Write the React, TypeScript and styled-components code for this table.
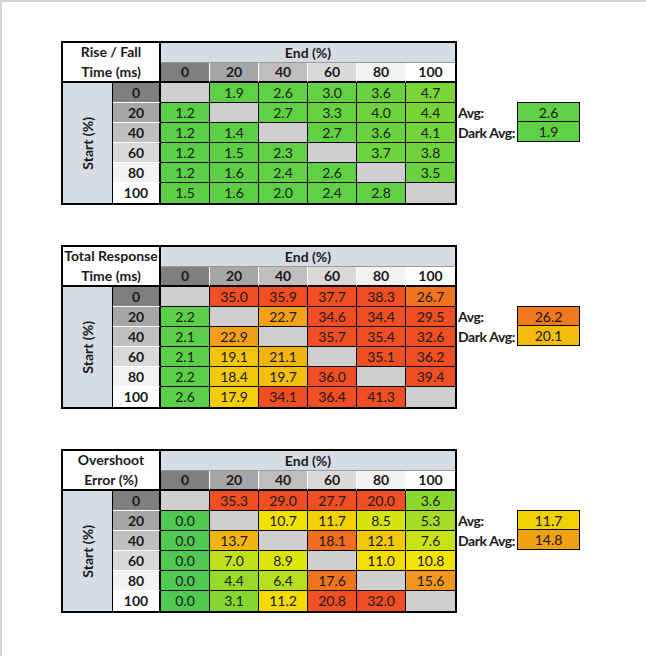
import styled, { createGlobalStyle } from 'styled-components'

const GlobalStyle = createGlobalStyle`
	html, body {
		margin: 0;
		padding: 0;
		background: #ffffff;
	}
	body {
		font-family: Lato, 'Liberation Sans', sans-serif;
		font-size: 14px;
		color: #1a1a1a;
	}
`

type Stop = [number, string]

const hexToRgb = (hex: string) => {
	const n = parseInt(hex.slice(1), 16)
	return [(n >> 16) & 255, (n >> 8) & 255, n & 255]
}

// linear interpolation over a list of colour stops
const scale = (v: number, stops: Stop[]) => {
	if (v <= stops[0][0]) return stops[0][1]
	for (let i = 1; i < stops.length; i++) {
		const [v1, c1] = stops[i]
		if (v <= v1) {
			const [v0, c0] = stops[i - 1]
			const t = (v - v0) / (v1 - v0)
			const a = hexToRgb(c0)
			const b = hexToRgb(c1)
			const mix = a.map((x, k) => Math.round(x + (b[k] - x) * t))
			return `rgb(${mix.join(',')})`
		}
	}
	return stops[stops.length - 1][1]
}

const levels = ['0', '20', '40', '60', '80', '100']
const shades = ['#7f7f7f', '#a6a6a6', '#bfbfbf', '#d9d9d9', '#f2f2f2', '#ffffff']

interface Chart {
	title: [string, string]
	values: (number | null)[][]
	avg: number
	darkAvg: number
	stops: Stop[]
}

const charts: Chart[] = [
	{
		title: ['Rise / Fall', 'Time (ms)'],
		values: [
			[null, 1.9, 2.6, 3.0, 3.6, 4.7],
			[1.2, null, 2.7, 3.3, 4.0, 4.4],
			[1.2, 1.4, null, 2.7, 3.6, 4.1],
			[1.2, 1.5, 2.3, null, 3.7, 3.8],
			[1.2, 1.6, 2.4, 2.6, null, 3.5],
			[1.5, 1.6, 2.0, 2.4, 2.8, null],
		],
		avg: 2.6,
		darkAvg: 1.9,
		stops: [
			[1.2, '#5bcf47'],
			[3.0, '#62d143'],
			[4.7, '#7cd537'],
		],
	},
	{
		title: ['Total Response', 'Time (ms)'],
		values: [
			[null, 35.0, 35.9, 37.7, 38.3, 26.7],
			[2.2, null, 22.7, 34.6, 34.4, 29.5],
			[2.1, 22.9, null, 35.7, 35.4, 32.6],
			[2.1, 19.1, 21.1, null, 35.1, 36.2],
			[2.2, 18.4, 19.7, 36.0, null, 39.4],
			[2.6, 17.9, 34.1, 36.4, 41.3, null],
		],
		avg: 26.2,
		darkAvg: 20.1,
		stops: [
			[2.6, '#5bcf47'],
			[17.9, '#f2cd0e'],
			[21.1, '#f2b40f'],
			[22.8, '#f4a01a'],
			[26.5, '#f0761f'],
			[29.5, '#f04e23'],
		],
	},
	{
		title: ['Overshoot', 'Error (%)'],
		values: [
			[null, 35.3, 29.0, 27.7, 20.0, 3.6],
			[0.0, null, 10.7, 11.7, 8.5, 5.3],
			[0.0, 13.7, null, 18.1, 12.1, 7.6],
			[0.0, 7.0, 8.9, null, 11.0, 10.8],
			[0.0, 4.4, 6.4, 17.6, null, 15.6],
			[0.0, 3.1, 11.2, 20.8, 32.0, null],
		],
		avg: 11.7,
		darkAvg: 14.8,
		stops: [
			[0, '#4fc94f'],
			[3.1, '#86d631'],
			[4.4, '#98da2b'],
			[5.3, '#a6dc27'],
			[7.0, '#c0e01e'],
			[8.9, '#dce60c'],
			[10.8, '#f2e300'],
			[11.2, '#f2da02'],
			[11.7, '#f1d004'],
			[12.1, '#f1c80a'],
			[13.7, '#f2b40f'],
			[14.8, '#f2a014'],
			[15.6, '#f0961a'],
			[17.6, '#f0741e'],
			[18.1, '#f06c1f'],
			[20.0, '#f04e23'],
		],
	},
]

const Page = styled.div`
	box-sizing: border-box;
	width: 646px;
	height: 656px;
	border-top: 2px solid #d4d4d4;
	border-left: 2px solid #d4d4d4;
	padding: 39px 0 0 59px;
	overflow: hidden;
`

const Block = styled.section`
	display: flex;
	align-items: flex-start;
	margin-bottom: 40px;
`

const Grid = styled.div`
	display: grid;
	grid-template-columns: 50px 48px repeat(6, 49px);
	grid-template-rows: repeat(8, 20px);
	border: 2px solid #000;
	background: #ffffff;
`

const CellBase = styled.div`
	box-sizing: border-box;
	display: flex;
	align-items: center;
	justify-content: center;
	line-height: 1;
	white-space: nowrap;
`

const Corner = styled(CellBase)`
	grid-column: 1 / 3;
	grid-row: 1 / 3;
	flex-direction: column;
	font-weight: 700;
	background: #ffffff;
	border-right: 2px solid #000;
	border-bottom: 2px solid #000;
	line-height: 20px;
	padding-bottom: 1px;
`

const EndHead = styled(CellBase)`
	grid-column: 3 / 9;
	grid-row: 1;
	font-weight: 700;
	background: #d6dce4;
	border-bottom: 1px solid #9a9a9a;
`

const ColHead = styled(CellBase)<{ $bg: string; $last: boolean }>`
	grid-row: 2;
	font-weight: 700;
	background: ${(p) => p.$bg};
	border-right: ${(p) => (p.$last ? 'none' : '1px solid #ffffff')};
	border-bottom: 2px solid #000;
`

const StartHead = styled(CellBase)`
	grid-column: 1;
	grid-row: 3 / 9;
	background: #d6dce4;
	border-right: 1px solid #000;
`

const Vertical = styled.span`
	writing-mode: vertical-rl;
	transform: rotate(180deg);
	font-weight: 700;
`

const RowHead = styled(CellBase)<{ $bg: string; $last: boolean }>`
	grid-column: 2;
	font-weight: 700;
	background: ${(p) => p.$bg};
	border-right: 2px solid #000;
	border-bottom: ${(p) => (p.$last ? 'none' : '1px solid #ffffff')};
`

const DataCell = styled(CellBase)<{ $bg: string; $lastCol: boolean; $lastRow: boolean }>`
	background: ${(p) => p.$bg};
	border-right: ${(p) => (p.$lastCol ? 'none' : '1px solid #000')};
	border-bottom: ${(p) => (p.$lastRow ? 'none' : '1px solid #000')};
`

const Side = styled.div`
	display: grid;
	grid-template-columns: 60px 63px;
	grid-auto-rows: 20px;
	margin-top: 61px;
`

const SideLabel = styled.div`
	display: flex;
	align-items: center;
	padding-left: 1px;
	font-weight: 700;
	letter-spacing: -0.4px;
	white-space: nowrap;
`

const AvgBox = styled.div<{ $bg: string; $first: boolean }>`
	box-sizing: border-box;
	display: flex;
	align-items: center;
	justify-content: center;
	background: ${(p) => p.$bg};
	border: 1px solid #000;
	border-top: ${(p) => (p.$first ? '1px solid #000' : 'none')};
`

const ResponseTable = ({ chart }: { chart: Chart }) => (
	<Block>
		<Grid>
			<Corner>
				<span>{chart.title[0]}</span>
				<span>{chart.title[1]}</span>
			</Corner>
			<EndHead>End (%)</EndHead>
			{levels.map((l, i) => (
				<ColHead key={l} $bg={shades[i]} $last={i === 5} style={{ gridColumn: i + 3 }}>
					{l}
				</ColHead>
			))}
			<StartHead>
				<Vertical>Start (%)</Vertical>
			</StartHead>
			{levels.map((l, r) => (
				<RowHead key={l} $bg={shades[r]} $last={r === 5} style={{ gridRow: r + 3 }}>
					{l}
				</RowHead>
			))}
			{chart.values.map((row, r) =>
				row.map((v, c) => (
					<DataCell
						key={`${r}-${c}`}
						$bg={v === null ? '#d0cece' : scale(v, chart.stops)}
						$lastCol={c === 5}
						$lastRow={r === 5}
						style={{ gridRow: r + 3, gridColumn: c + 3 }}
					>
						{v === null ? '' : v.toFixed(1)}
					</DataCell>
				)),
			)}
		</Grid>
		<Side>
			<SideLabel>Avg:</SideLabel>
			<AvgBox $bg={scale(chart.avg, chart.stops)} $first>
				{chart.avg.toFixed(1)}
			</AvgBox>
			<SideLabel>Dark Avg:</SideLabel>
			<AvgBox $bg={scale(chart.darkAvg, chart.stops)} $first={false}>
				{chart.darkAvg.toFixed(1)}
			</AvgBox>
		</Side>
	</Block>
)

export default function App() {
	return (
		<>
			<GlobalStyle />
			<Page>
				{charts.map((c) => (
					<ResponseTable key={c.title[0]} chart={c} />
				))}
			</Page>
		</>
	)
}
